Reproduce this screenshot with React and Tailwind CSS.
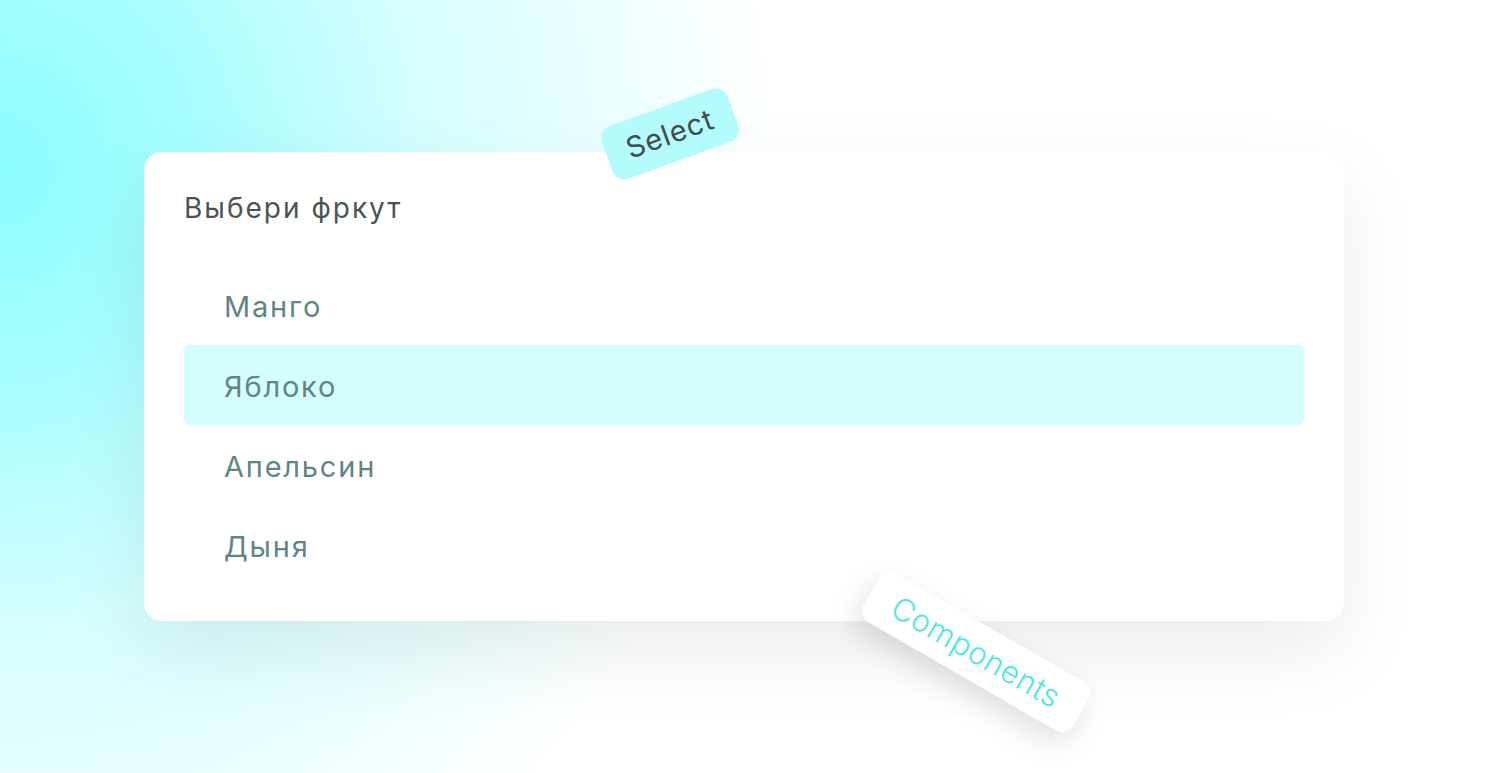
export default function App() {
  const items = ["Манго", "Яблоко", "Апельсин", "Дыня"];
  return (
    <div
      className="w-full h-screen flex items-center justify-center overflow-hidden bg-white"
      style={{
        fontFamily: "Inter, 'Noto Sans', sans-serif",
        backgroundImage:
          "radial-gradient(ellipse 780px 840px at 0% 22%, #8bfcff 0%, #a6fdff 25%, #d6feff 55%, #ffffff 100%)",
      }}
    >
      <div className="relative w-[1200px] h-[469px] bg-white rounded-[18px] shadow-[0_30px_80px_rgba(0,0,0,0.08)] px-10 pt-10 pb-9 flex flex-col">
        <div className="h-8 flex items-center text-[28px] leading-8 tracking-[2px] text-[#4a5553]">
          Выбери фркут
        </div>
        <div className="mt-[41px] flex flex-col">
          {items.map((it, i) => (
            <div
              key={it}
              className={
                "h-20 flex items-center pl-10 rounded-md text-[29px] tracking-[1.8px] text-[#5e8685] " +
                (i === 1 ? "bg-[#d4fefe]" : "")
              }
            >
              <span className="mt-1">{it}</span>
            </div>
          ))}
        </div>

        <div className="absolute left-[526px] top-[-18px] -translate-x-1/2 -translate-y-1/2 rotate-[-20deg] w-[134px] h-[56px] rounded-[13px] bg-[#b3fbfc] flex items-center justify-center text-[29px] tracking-[1px] text-[#434c4b]">
          Select
        </div>

        <div className="absolute left-[832px] top-[500px] -translate-x-1/2 -translate-y-1/2 rotate-[30deg] w-[242px] h-[56px] rounded-[14px] bg-white shadow-[0_12px_30px_rgba(0,0,0,0.12)] flex items-center justify-center text-[31px] tracking-[0.5px] font-light text-[#4fe6e6]">
          Components
        </div>
      </div>
    </div>
  );
}
